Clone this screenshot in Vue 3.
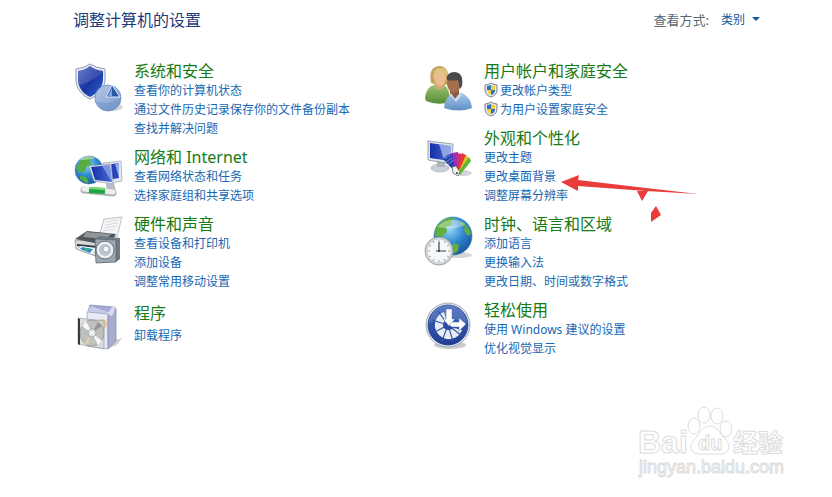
<template>
  <main class="panel">
    <header class="panel-header">
      <h1>调整计算机的设置</h1>
      <div class="view-by">
        <label for="viewMode">查看方式:</label>
        <select id="viewMode" v-model="viewMode">
          <option value="category">类别</option>
        </select>
        <svg class="caret" width="10" height="6" viewBox="0 0 10 6"><path d="M1 1h8L5 5z" fill="#14599b" /></svg>
      </div>
    </header>

    <div class="columns">
      <div v-for="(column, i) in columns" :key="i" class="column">
        <section v-for="group in column" :key="group.icon" class="group" :class="{ short: group.links.length === 1 }">
          <svg class="icon" viewBox="0 0 48 48" aria-hidden="true">
            <g v-if="group.icon === 'security'">
              <path d="M15 1Q9 5 1 6v10c0 9 5 16 14 20 9-4 15-11 15-20V6Q21 5 15 1z" fill="#e9edf5" stroke="#8c98b2" />
              <path d="M15 3Q10 7 3 8v8c0 8 4 14 12 18 8-4 13-10 13-18V8Q20 7 15 3z" fill="url(#shieldBlue)" />
              <path d="M15 3Q10 7 3 8v8l1 6Q16 20 28 9V8Q20 7 15 3z" fill="#fff" opacity=".14" />
              <ellipse cx="37" cy="44" rx="11" ry="4" fill="#b9bdc6" opacity=".6" />
              <circle cx="33" cy="35" r="13" fill="url(#pieBlue)" stroke="#7089b5" stroke-width=".8" />
              <path d="M37 22l8 12H31z" fill="#2b58a6" stroke="#e3ecfa" stroke-width="1" />
              <path d="M37 25v8h-4z" fill="#86a7dc" />
              <path d="M21 38q12 5 24-2-2 11-12 12-9-1-12-10z" fill="#6d91c8" opacity=".5" />
            </g>

            <g v-else-if="group.icon === 'network'">
              <circle cx="14" cy="21" r="14" fill="url(#globe)" stroke="#438cb0" stroke-width=".6" />
              <path d="M5 12q5-6 13-4l-3 4 2 4-5 1-2 5-6 2-3-5zM5 27l6 1 3 5-3 1-6-4z" fill="#56ad43" />
              <path d="M4 11q7-7 17-2-7 2-17 2z" fill="#fff" opacity=".4" />
              <path d="M28 14l18-2 1 20-15 3z" fill="#e3e7ee" stroke="#9ba5b5" stroke-width=".7" />
              <path d="M31 16l13-2v15l-12 2z" fill="#2643b7" />
              <path d="M40 15l4-1v15z" fill="#8fa9e9" />
              <path d="M31 35l8-1 2 8-9 1z" fill="#b8bec8" />
              <path d="M14 17l22-2 2 20-19-3z" fill="#edf0f5" stroke="#929cae" stroke-width=".7" />
              <path d="M16 18l19-2 2 17-17-2z" fill="url(#screen)" />
              <path d="M27 17l8-1 2 17z" fill="#a9bcf0" opacity=".6" />
              <path d="M9 41l29 3" stroke="#acb1b5" stroke-width="7" stroke-linecap="round" />
              <path d="M9 40l29 3" stroke="#edf0ec" stroke-width="5" stroke-linecap="round" />
              <path d="M14 41l16 1" stroke="#20a443" stroke-width="6" />
              <path d="M14 39l16 1" stroke="#7add7c" stroke-width="2" />
            </g>

            <g v-else-if="group.icon === 'hardware'">
              <path d="M29 3l18-2-5 20-17-4z" fill="#f3f5f7" stroke="#a5a9ae" stroke-width=".7" />
              <path d="M31 6l12-2M30 9l13-2M29 12l13-2M28 15l12-2" stroke="#cbd0d5" stroke-width=".7" />
              <path d="M0 24l30 2v11l-10 3L1 33z" fill="#d6d9dc" stroke="#777d83" stroke-width=".6" />
              <path d="M0 23l12-8 29 3-5 9-12 1z" fill="#53575c" />
              <path d="M11 16l25 2-5 5-23-2z" fill="#92979c" />
              <path d="M2 28l20 2v2L2 30z" fill="#343a40" />
              <path d="M6 30l14 2-3 6-13-5z" fill="#fff" />
              <path d="M7 31l11 2-3 4-10-4z" fill="#258bd2" />
              <path d="M9 32l6 1-4 2z" fill="#59b648" />
              <path d="M20 23l4-3 21 2v21l-4 3-20 1z" fill="#6e7a84" />
              <path d="M20 23l21 1v22l-20 1z" fill="#9ba8b2" stroke="#54606a" stroke-width=".7" />
              <circle cx="30" cy="34" r="9" fill="#e9eef1" stroke="#64707a" />
              <circle cx="30" cy="34" r="6" fill="#bcc5cb" />
              <circle cx="31" cy="33" r="3" fill="#f7f9fa" stroke="#8b969e" stroke-width=".6" />
            </g>

            <g v-else-if="group.icon === 'programs'">
              <path d="M34 40l13-4-5 7-10 4z" fill="#babac2" opacity=".7" />
              <path d="M15 3l25 2-3 5-24-1z" fill="#a5a9d8" stroke="#7f83b0" stroke-width=".6" />
              <path d="M12 10l4-6 17 6v5z" fill="#c9cbed" />
              <path d="M12 10l21 2v35l-21-3z" fill="#e9e9f7" stroke="#9698bd" stroke-width=".7" />
              <path d="M33 12l8-6v33l-8 8z" fill="#aaaccd" stroke="#8588ad" stroke-width=".7" />
              <path d="M32 12l6-8 3 1-4 9z" fill="#d9daef" />
              <circle cx="27" cy="22" r="5" fill="#e6b779" opacity=".7" />
              <path d="M3 16l26 3v28L3 42z" fill="#d2dad5" stroke="#82878b" stroke-width=".6" opacity=".85" />
              <path d="M3 16l2 1v26l-2-1z" fill="#36383a" />
              <ellipse cx="17" cy="31" rx="12" ry="13" fill="#bfc0bd" stroke="#85898b" stroke-width=".6" />
              <path d="M17 31L7 24l4-5zM17 31l10 8-4 4z" fill="#f9f9f9" />
              <path d="M17 31l6-11 4 4z" fill="#90979c" />
              <path d="M17 31L9 41l4 2z" fill="#d6ceb0" />
              <circle cx="17" cy="31" r="4" fill="#e4e8eb" stroke="#868b91" stroke-width=".6" />
              <circle cx="17" cy="31" r="1" fill="#fff" />
            </g>

            <g v-else-if="group.icon === 'users'">
              <path d="M0 35q1-11 9-13h10q6 3 6 17-12 4-24-1z" fill="url(#shirtGreen)" />
              <path d="M10 19h8v6q-4 4-8-1z" fill="#d9a878" />
              <path d="M6 20Q3 4 14 3q11 0 10 18-9 3-18-1z" fill="#c6a45a" />
              <ellipse cx="15" cy="14" rx="6" ry="9" fill="#ebbd94" />
              <path d="M8 14q1-10 8-9 7 1 7 7-6 0-9-4-1 4-6 6z" fill="#dfc37d" />
              <path d="M19 45q1-12 10-15h8q9 4 10 15-13 5-28 0z" fill="url(#shirtBlue)" />
              <path d="M25 26h9v5l-4 5-5-5z" fill="#8c5a3d" />
              <ellipse cx="29" cy="20" rx="7" ry="10" fill="#a36e4a" />
              <path d="M22 17q-1-8 8-8 9 1 7 14l-2 3-2-9q-6 1-11 0z" fill="#4c4a49" />
              <path d="M26 30l4 6 5-6 2 2-6 7-6-7z" fill="#c9ddf1" />
            </g>

            <g v-else-if="group.icon === 'appearance'">
              <ellipse cx="15" cy="38" rx="9" ry="4" fill="#cbd0d6" stroke="#a5abb4" stroke-width=".6" />
              <path d="M12 29h8v8h-8z" fill="#aeb5c0" />
              <path d="M3 11l25 3-1 20-24-4z" fill="#dfe3ea" stroke="#858fa2" stroke-width=".8" />
              <path d="M5 13l21 3-1 15-20-3z" fill="url(#screen)" />
              <path d="M14 14l12 2-1 15-6-1z" fill="#bfccf3" opacity=".65" />
              <ellipse cx="38" cy="43" rx="9" ry="3" fill="#b8b8bd" opacity=".6" />
              <path d="M31 43L18 29l5-4 11 17z" fill="#2142a5" />
              <path d="M31 43L22 25l6-2 6 20z" fill="#333cbe" />
              <path d="M31 43l-4-20 6-1 2 20z" fill="#9b32ab" />
              <path d="M32 43V23l5 1-2 19z" fill="#df287b" />
              <path d="M32 43l5-20 4 2-6 18z" fill="#e33b2e" />
              <path d="M33 43l8-18 3 3-9 15z" fill="#e9be20" />
              <path d="M33 43l11-16 2 4-11 14z" fill="#5ab72e" />
              <path d="M20 29l5-4M21 32l6-4M23 34l6-4" stroke="#7d9ee6" stroke-width=".8" />
              <path d="M27 37l4-1 4 6-2 4-5-3z" fill="#f4f4f5" stroke="#54565b" stroke-width=".7" />
              <circle cx="32" cy="43" r="1" fill="#333" />
            </g>

            <g v-else-if="group.icon === 'clock'">
              <ellipse cx="33" cy="39" rx="14" ry="3" fill="#aaa" opacity=".5" />
              <circle cx="28" cy="20" r="19" fill="url(#globe)" stroke="#3475a9" stroke-width=".6" />
              <path d="M13 9q8-9 17-7l-4 3 1 4-6 2 1 5-6 5-6-1q-1-6 3-11zM35 5q9 4 11 13l-3 2-4-5 1-4-4-2zM29 27l5 2-1 6-5 3-3-4z" fill="#61ae3d" />
              <path d="M12 11Q25-2 41 8q-10 7-29 3z" fill="#fff" opacity=".35" />
              <circle cx="14" cy="35" r="14" fill="#d2d9df" stroke="#8a9299" stroke-width=".8" />
              <circle cx="14" cy="35" r="12" fill="#f5f7f8" stroke="#b7bfc5" stroke-width=".6" />
              <path d="M14 24v2M14 44v2M3 35h2M23 35h2M8 25l1 2M19 43l1 2M20 25l-1 2M9 43l-1 2M4 29l2 1M22 40l2 1M24 29l-2 1M6 40l-2 1" stroke="#878e95" stroke-width=".8" />
              <path d="M14 26v9h7M11 35h3" fill="none" stroke="#31404f" stroke-width="1.2" />
              <circle cx="14" cy="35" r="1" fill="#25323f" />
            </g>

            <g v-else>
              <ellipse cx="25" cy="43" rx="16" ry="4" fill="#999" opacity=".5" />
              <circle cx="23" cy="23" r="22" fill="#e5e8ef" stroke="#8f98ab" stroke-width=".8" />
              <circle cx="23" cy="23" r="20" fill="url(#accessBlue)" stroke="#24448e" stroke-width=".8" />
              <path d="M4 21Q5 4 23 3q18 1 19 18-17-8-38 0z" fill="#fff" opacity=".14" />
              <path d="M37 28A14 14 0 1 1 19 10l2 7a6 6 0 1 0 8 9z" fill="#e9edf5" />
              <path d="M23 23L7 18M23 23L8 31M23 23l-6 16M23 23l5 16M23 23l14 11M23 23l-10-14" stroke="#3157a6" stroke-width="1.2" />
              <circle cx="23" cy="23" r="5" fill="#2a4ba0" />
              <path d="M21 7h6v10h3l-6 7-6-7h3z" fill="#fff" stroke="#5272b4" stroke-width=".5" />
              <path d="M27 20h7v-4l7 6-7 7v-4h-7l-3-2z" fill="#fff" stroke="#5272b4" stroke-width=".5" />
            </g>
          </svg>

          <div class="group-body">
            <h2><a href="#">{{ group.title }}</a></h2>
            <ul>
              <li v-for="link in group.links" :key="link">
                <svg v-if="group.admin" class="uac" viewBox="0 0 14 16" aria-hidden="true">
                  <path d="M7 1Q4 3 1 3v5q0 5 6 7 6-2 6-7V3Q10 3 7 1z" fill="#e5e9ef" stroke="#77818f" />
                  <path d="M7 3Q5 4 3 4v4h4z" fill="#2e72bd" />
                  <path d="M7 3q2 1 4 1v4H7z" fill="#f3cf42" />
                  <path d="M3 8h4v5Q3 12 3 8z" fill="#f3cf42" />
                  <path d="M7 8h4q0 4-4 5z" fill="#2e72bd" />
                </svg>
                <a href="#">{{ link }}</a>
                <svg v-if="link === highlighted" class="pointer" viewBox="0 0 140 54" aria-hidden="true">
                  <path d="M1 10L19 3l-1 5 68 8 52 6-52-3-68-5v5z" />
                  <path d="M77 19h11l-6 10zM96 34l5 9-10 7V41z" />
                </svg>
              </li>
            </ul>
          </div>
        </section>
      </div>
    </div>

    <footer class="brand">
      <svg viewBox="0 0 150 74" width="150" height="74">
        <g class="paw">
          <ellipse cx="56" cy="20" rx="6" ry="8" />
          <ellipse cx="66" cy="9" rx="6" ry="8" />
          <ellipse cx="79" cy="10" rx="6" ry="8" />
          <ellipse cx="88" cy="23" rx="6" ry="8" />
          <path d="M72 20c8 0 10 9 16 14 6 6 2 14-5 14H61c-8 0-11-8-5-14 6-6 8-14 16-14z" />
        </g>
        <text class="logo" x="0" y="47">Bai</text>
        <text class="logo-du" x="60" y="44">du</text>
        <text class="logo-cn" x="95" y="46">经验</text>
        <text class="site" x="1" y="67">jingyan.baidu.com</text>
      </svg>
    </footer>

    <svg class="defs" width="0" height="0" aria-hidden="true">
      <defs>
        <linearGradient id="shieldBlue" x1="0" y1="0" x2="1" y2="1">
          <stop offset="0" stop-color="#4a66c4" />
          <stop offset=".5" stop-color="#1a34a2" />
          <stop offset="1" stop-color="#2c65d2" />
        </linearGradient>
        <linearGradient id="pieBlue" x1="0" y1="0" x2="1" y2="1">
          <stop offset="0" stop-color="#b9cdea" />
          <stop offset="1" stop-color="#7594c6" />
        </linearGradient>
        <radialGradient id="globe" cx=".4" cy=".3" r=".8">
          <stop offset="0" stop-color="#9bdcf5" />
          <stop offset=".5" stop-color="#2e87ce" />
          <stop offset="1" stop-color="#174b9b" />
        </radialGradient>
        <linearGradient id="screen" x1="0" y1="0" x2="1" y2="0">
          <stop offset="0" stop-color="#1430a8" />
          <stop offset="1" stop-color="#4667d5" />
        </linearGradient>
        <linearGradient id="shirtGreen" x1="0" y1="0" x2="0" y2="1">
          <stop offset="0" stop-color="#9bc370" />
          <stop offset="1" stop-color="#568b36" />
        </linearGradient>
        <linearGradient id="shirtBlue" x1="0" y1="0" x2="0" y2="1">
          <stop offset="0" stop-color="#a8c9ec" />
          <stop offset="1" stop-color="#5d8fc7" />
        </linearGradient>
        <linearGradient id="accessBlue" x1="0" y1="0" x2="0" y2="1">
          <stop offset="0" stop-color="#4165b8" />
          <stop offset="1" stop-color="#203f94" />
        </linearGradient>
      </defs>
    </svg>
  </main>
</template>

<script setup>
import { ref } from 'vue';

const viewMode = ref('category');
const highlighted = ref('更改桌面背景');

const columns = [
  [
    {
      icon: 'security',
      title: '系统和安全',
      links: ['查看你的计算机状态', '通过文件历史记录保存你的文件备份副本', '查找并解决问题']
    },
    {
      icon: 'network',
      title: '网络和 Internet',
      links: ['查看网络状态和任务', '选择家庭组和共享选项']
    },
    {
      icon: 'hardware',
      title: '硬件和声音',
      links: ['查看设备和打印机', '添加设备', '调整常用移动设置']
    },
    {
      icon: 'programs',
      title: '程序',
      links: ['卸载程序']
    }
  ],
  [
    {
      icon: 'users',
      title: '用户帐户和家庭安全',
      admin: true,
      links: ['更改帐户类型', '为用户设置家庭安全']
    },
    {
      icon: 'appearance',
      title: '外观和个性化',
      links: ['更改主题', '更改桌面背景', '调整屏幕分辨率']
    },
    {
      icon: 'clock',
      title: '时钟、语言和区域',
      links: ['添加语言', '更换输入法', '更改日期、时间或数字格式']
    },
    {
      icon: 'access',
      title: '轻松使用',
      links: ['使用 Windows 建议的设置', '优化视觉显示']
    }
  ]
];
</script>

<style>
body {
  margin: 0;
  background: #fff;
}
</style>

<style scoped>
.panel {
  font-family: "Noto Sans", "Noto Sans CJK SC", sans-serif;
  font-size: 12px;
}

.panel-header {
  display: flex;
  justify-content: space-between;
  padding: 8px 71px 0 73px;
}

h1 {
  margin: 0;
  font-size: 16px;
  font-weight: 400;
  line-height: 24px;
  color: #1c3a7c;
}

.view-by {
  display: flex;
  align-items: center;
  height: 22px;
}

.view-by label {
  margin-right: 12px;
  font-size: 13px;
  color: #5a6570;
}

.view-by select {
  appearance: none;
  margin: 0;
  padding: 0;
  border: none;
  background: none;
  font: inherit;
  color: #14599b;
  cursor: pointer;
}

.caret {
  margin-left: 5px;
}

.columns {
  display: grid;
  grid-template-columns: 1fr 1fr;
  padding: 29px 59px 0 73px;
}

.column {
  display: flex;
  flex-direction: column;
  gap: 9px;
}

.group {
  display: flex;
  gap: 11px;
}

.icon {
  flex: none;
  width: 48px;
  height: 48px;
  margin: 2px 0 0 2px;
  overflow: visible;
}

h2 {
  margin: 0;
  font-size: 16px;
  font-weight: 400;
  line-height: 20px;
}

h2 a {
  color: #167a16;
}

a {
  color: #1668b4;
  text-decoration: none;
}

a:hover {
  text-decoration: underline;
}

ul {
  margin: 0;
  padding: 0;
  list-style: none;
}

li {
  position: relative;
  display: flex;
  align-items: center;
  box-sizing: border-box;
  height: 19px;
  padding-bottom: 2px;
  white-space: nowrap;
}

.short .group-body {
  padding-top: 3px;
}

.short ul {
  margin-top: 3px;
}

.uac {
  width: 14px;
  height: 16px;
  margin-right: 2px;
}

.pointer {
  position: absolute;
  left: 76px;
  top: 5px;
  width: 140px;
  height: 54px;
  fill: #ea3b3b;
  pointer-events: none;
}

.brand {
  display: flex;
  justify-content: flex-end;
  padding: 48px 44px 0 0;
}

.brand text,
.paw {
  fill: #fff;
  stroke: #dcdcdc;
  stroke-width: 1;
}

.brand .logo {
  font: bold 32px "Liberation Sans", sans-serif;
}

.brand .logo-du {
  font: bold 20px "Liberation Sans", sans-serif;
}

.brand .logo-cn {
  font: bold 25px "Noto Sans CJK SC", sans-serif;
}

.brand .site {
  font: 18px "Liberation Sans", sans-serif;
}

.defs {
  position: absolute;
}
</style>
